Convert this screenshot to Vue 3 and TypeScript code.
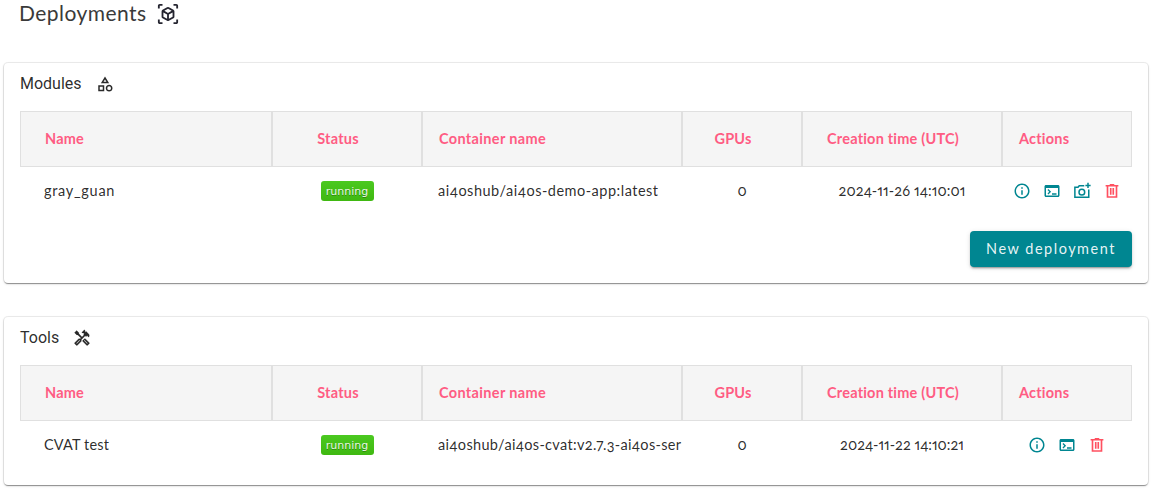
<script setup lang="ts">
interface Deployment {
  name: string
  status: string
  container: string
  gpus: number
  created: string
  actions: string[]
}

interface Section {
  id: string
  title: string
  rows: Deployment[]
  button?: string
}

const columns = [
  { key: 'name', label: 'Name' },
  { key: 'status', label: 'Status' },
  { key: 'container', label: 'Container name' },
  { key: 'gpus', label: 'GPUs' },
  { key: 'created', label: 'Creation time (UTC)' },
  { key: 'actions', label: 'Actions' },
]

const sections: Section[] = [
  {
    id: 'modules',
    title: 'Modules',
    rows: [
      {
        name: 'gray_guan',
        status: 'running',
        container: 'ai4oshub/ai4os-demo-app:latest',
        gpus: 0,
        created: '2024-11-26 14:10:01',
        actions: ['info', 'terminal', 'snapshot', 'delete'],
      },
    ],
    button: 'New deployment',
  },
  {
    id: 'tools',
    title: 'Tools',
    rows: [
      {
        name: 'CVAT test',
        status: 'running',
        container: 'ai4oshub/ai4os-cvat:v2.7.3-ai4os-ser',
        gpus: 0,
        created: '2024-11-22 14:10:21',
        actions: ['info', 'terminal', 'delete'],
      },
    ],
  },
]
</script>

<template>
  <main class="page">
    <header class="page-title">
      <h1>Deployments</h1>
      <svg class="title-icon" viewBox="0 0 24 24">
        <path d="M3 3h3V1H3C1.9 1 1 1.9 1 3v3h2V3zM3 18H1v3c0 1.1.9 2 2 2h3v-2H3v-3zM21 1h-3v2h3v3h2V3c0-1.1-.9-2-2-2zM21 21h-3v2h3c1.1 0 2-.9 2-2v-3h-2v3zM19 14.87V9.13c0-.72-.38-1.38-1-1.73l-5-2.88a2 2 0 0 0-2 0L6 7.39c-.62.36-1 1.02-1 1.74v5.74c0 .72.38 1.38 1 1.73l5 2.88a2 2 0 0 0 2 0l5-2.88c.62-.35 1-1.01 1-1.73zm-8 2.3l-4-2.3v-4.63l4 2.33v4.6zm1-6.33L8.04 8.53 12 6.25l3.96 2.28L12 10.84zm5 4.03l-4 2.3v-4.6l4-2.33v4.63z" />
      </svg>
    </header>

    <section v-for="section in sections" :key="section.id" class="card">
      <div class="card-title">
        <h2>{{ section.title }}</h2>
        <svg v-if="section.id === 'modules'" class="icon" viewBox="0 0 24 24">
          <path d="M12 2l-5.5 9h11L12 2zm0 3.84L13.93 9h-3.87L12 5.84zM17.5 13c-2.49 0-4.5 2.01-4.5 4.5s2.01 4.5 4.5 4.5 4.5-2.01 4.5-4.5-2.01-4.5-4.5-4.5zm0 7a2.5 2.5 0 0 1 0-5 2.5 2.5 0 0 1 0 5zM3 21.5h8v-8H3v8zm2-6h4v4H5v-4z" />
        </svg>
        <svg v-else class="icon tools-icon" viewBox="0 0 24 24">
          <path d="M21.67 18.17l-5.3-5.3h-.99l-2.54 2.54v.99l5.3 5.3c.39.39 1.02.39 1.41 0l2.12-2.12c.39-.38.39-1.02 0-1.41zm-2.83 1.42l-4.24-4.24.71-.71 4.24 4.24-.71.71z" />
          <path d="M17.34 10.19l1.41-1.41 2.12 2.12c1.17-1.17 1.17-3.07 0-4.24l-3.54-3.54-1.41 1.41V1.71L15.22 1l-3.54 3.54.71.71h2.83l-1.41 1.41 1.06 1.06-2.89 2.89-4.13-4.13V5.06L4.83 2.04 2 4.87 5.03 7.9h1.41l4.13 4.13-.85.85H7.6l-5.3 5.3c-.39.39-.39 1.02 0 1.41l2.12 2.12c.39.39 1.02.39 1.41 0l5.3-5.3v-2.12l5.15-5.15 1.06 1.05zm-7.98 5.15l-4.24 4.24-.71-.71 4.24-4.24.71.71z" />
        </svg>
      </div>

      <div class="table">
        <div class="row head">
          <div v-for="c in columns" :key="c.key" class="cell" :class="c.key"><span>{{ c.label }}</span></div>
        </div>
        <div v-for="row in section.rows" :key="row.name" class="row body" :class="section.id">
          <div class="cell name"><span>{{ row.name }}</span></div>
          <div class="cell status"><span class="badge">{{ row.status }}</span></div>
          <div class="cell container"><span>{{ row.container }}</span></div>
          <div class="cell gpus"><span>{{ row.gpus }}</span></div>
          <div class="cell created"><span>{{ row.created }}</span></div>
          <div class="cell actions">
            <svg v-for="a in row.actions" :key="a" class="icon" :class="a" viewBox="0 0 24 24">
              <path v-if="a === 'info'" d="M11 7h2v2h-2zm0 4h2v6h-2zm1-9C6.48 2 2 6.48 2 12s4.48 10 10 10 10-4.48 10-10S17.52 2 12 2zm0 18c-4.41 0-8-3.59-8-8s3.59-8 8-8 8 3.59 8 8-3.59 8-8 8z" />
              <path v-else-if="a === 'terminal'" d="M20 4H4c-1.11 0-2 .9-2 2v12c0 1.1.89 2 2 2h16c1.1 0 2-.9 2-2V6c0-1.1-.89-2-2-2zm0 14H4V8h16v10zm-2-1h-6v-2h6v2zM7.2 16.6l-1.2-1.2 2.3-2.4L6 10.600l1.200-1.200 3.600 3.600z" />
              <g v-else-if="a === 'snapshot'" class="line">
                <path d="M15 5H8.300L6.700 7H2.500v13.200h18.500V10" />
                <circle cx="11.800" cy="13.500" r="3.800" />
                <path d="M20 1v7M16.500 4.500h7" />
              </g>
              <g v-else class="line">
                <path d="M3.500 5h17M9 3.700h6M6 5v15h12V5M10.300 8v9M13.700 8v9" />
              </g>
            </svg>
          </div>
        </div>
      </div>

      <div v-if="section.button" class="card-actions">
        <button type="button">{{ section.button }}</button>
      </div>
    </section>
  </main>
</template>

<style>
body {
  background: #fff;
}
</style>

<style scoped>
.page {
  box-sizing: border-box;
  height: 491px;
  padding: 0 4px;
  overflow: hidden;
  color: rgba(0, 0, 0, 0.84);
  font-family: Lato, "Open Sans", sans-serif;
  font-variant-numeric: oldstyle-nums proportional-nums;
}

.page-title {
  display: flex;
  align-items: center;
  height: 28px;
  margin-bottom: 35px;
  padding-left: 15px;
}

h1 {
  width: 127px;
  margin: 0;
  color: #3a3a3a;
  font-size: 21px;
  font-weight: 400;
  line-height: 26px;
  padding-bottom: 2px;
  letter-spacing: 0.45px;
  white-space: nowrap;
}

.title-icon {
  width: 22px;
  height: 22px;
  margin-left: 11px;
  fill: #252530;
}

.icon {
  flex: none;
  width: 18px;
  height: 18px;
  fill: currentColor;
}

.card {
  box-sizing: border-box;
  margin-bottom: 34px;
  padding: 0 16px 16px;
  border-radius: 4px;
  background: #fff;
  box-shadow: 0 2px 1px -1px rgba(0, 0, 0, 0.22), 0 1px 1px 0 rgba(0, 0, 0, 0.16), 0 1px 3px 0 rgba(0, 0, 0, 0.12), 0 0 0 1px rgba(0, 0, 0, 0.07);
}

.card-title {
  display: flex;
  align-items: center;
  gap: 14px;
  height: 48px;
  box-sizing: border-box;
  padding-bottom: 6px;
}

.tools-icon {
  stroke: currentColor;
  stroke-width: 0.3;
}

.card-title .icon {
  margin-bottom: 1px;
}

h2 {
  margin: 0;
  font-family: Roboto, sans-serif;
  font-size: 16px;
  font-weight: 400;
  line-height: 24px;
}

.row {
  display: grid;
  grid-template-columns: 252px 150px 260px 120px 200px 130px;
}

.cell {
  display: flex;
  box-sizing: border-box;
  align-items: center;
  padding: 0 16px 2px;
  overflow: hidden;
  font-size: 14.5px;
  white-space: nowrap;
}

.cell.name {
  padding-left: 24px;
}

.status,
.gpus,
.created {
  justify-content: center;
}

.head .cell {
  height: 56px;
  border: 1px solid #e0e0e0;
  background: #f5f5f5;
  color: #ff5c83;
  font-weight: 700;
  letter-spacing: 0.2px;
}

.head .container {
  letter-spacing: 0.34px;
}

.head .status,
.head .gpus,
.head .created {
  padding-right: 34px;
}

.body .cell {
  height: 48px;
}

.body .name {
  letter-spacing: 0.7px;
}

.body .container {
  padding-right: 0;
  letter-spacing: 0.5px;
}

.body.tools .name {
  letter-spacing: 0.15px;
}

.body.tools .container {
  letter-spacing: 0.32px;
}

.body.modules .created {
  letter-spacing: 0.1px;
}

.body .status {
  padding-bottom: 0;
}

.body .actions {
  justify-content: center;
  gap: 12px;
  padding: 0;
  color: #008691;
}

.body .delete {
  color: #ff5060;
}

.line {
  fill: none;
  stroke: currentColor;
  stroke-width: 2;
}

.delete .line {
  stroke-width: 2.2;
}

.badge {
  box-sizing: border-box;
  width: 53px;
  height: 20px;
  padding-top: 1px;
  border-radius: 3px;
  background: linear-gradient(#4bc920, #3fb811);
  color: rgba(255, 255, 255, 0.9);
  font-family: "DejaVu Sans", sans-serif;
  font-size: 11px;
  line-height: 20px;
  text-align: center;
  text-shadow: 0 1px 0 rgba(1, 1, 1, 0.3);
}

.card-actions {
  display: flex;
  justify-content: flex-end;
  padding-top: 16px;
}

button {
  width: 162px;
  height: 36px;
  padding: 0 0 2px;
  border: 0;
  border-radius: 4px;
  background: #008691;
  box-shadow: 0 3px 1px -2px rgba(0, 0, 0, 0.2), 0 2px 2px 0 rgba(0, 0, 0, 0.14), 0 1px 5px 0 rgba(0, 0, 0, 0.12);
  color: rgba(255, 255, 255, 0.92);
  font-family: Lato, "Open Sans", sans-serif;
  font-size: 14.5px;
  letter-spacing: 1.5px;
}
</style>
